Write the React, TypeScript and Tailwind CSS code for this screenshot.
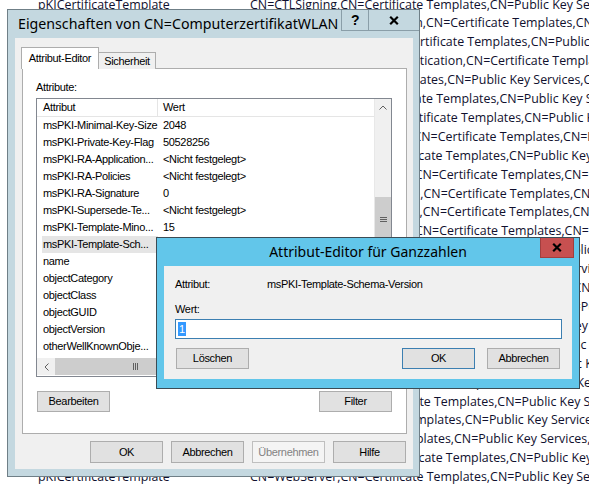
import React from 'react';

const templates = [
  'CTLSigning',
  'DirectoryEmailReplication',
  'DomainController',
  'DomainControllerAuthentication',
  'EFS',
  'EFSRecovery',
  'EnrollmentAgent',
  'EnrollmentAgentOffline',
  'ExchangeUser',
  'ExchangeUserSignature',
  'IPSECIntermediateOffline',
  'IPSECIntermediateOnline',
  'KerberosAuthentication',
  'KeyRecoveryAgent',
  'Machine',
  'MachineEnrollmentAgent',
  'OCSPResponseSigning',
  'OfflineRouter',
  'RASAndIASServer',
  'SmartcardLogon',
  'SmartcardUser',
  'Workstation',
  'SubCA',
  'User',
  'UserSignature',
  'WebServer',
];

const attributes: [string, string][] = [
  ['msPKI-Minimal-Key-Size', '2048'],
  ['msPKI-Private-Key-Flag', '50528256'],
  ['msPKI-RA-Application...', '<Nicht festgelegt>'],
  ['msPKI-RA-Policies', '<Nicht festgelegt>'],
  ['msPKI-RA-Signature', '0'],
  ['msPKI-Supersede-Te...', '<Nicht festgelegt>'],
  ['msPKI-Template-Mino...', '15'],
  ['msPKI-Template-Sch...', '1'],
  ['name', 'ComputerzertifikatWLAN'],
  ['objectCategory', 'CN=PKI-Certificate-Template,CN=Schema,CN=Configuration'],
  ['objectClass', 'top; pKICertificateTemplate'],
  ['objectGUID', '3f2a8c1e-5b7d-4e19-9a06-c4d2e8f71b35'],
  ['objectVersion', '100'],
  ['otherWellKnownObje...', '<Nicht festgelegt>'],
];

type Variant = 'normal' | 'default' | 'disabled';

const WinButton: React.FC<{ label: string; variant?: Variant; className?: string }> = ({
  label,
  variant = 'normal',
  className = '',
}) => {
  const look =
    variant === 'default'
      ? 'border-[#3c7fb1] bg-[#e1e1e1] text-black'
      : variant === 'disabled'
        ? 'border-[#bfbfbf] bg-[#f4f4f4] text-[#838383]'
        : 'border-[#adadad] bg-[#e1e1e1] text-black';
  return (
    <div className={`flex w-[73px] items-center justify-center border ${look} ${className}`}>{label}</div>
  );
};

const CloseGlyph: React.FC<{ size?: number }> = ({ size = 10 }) => (
  <svg width={size} height={size - 1} viewBox="0 0 10 9">
    <path d="M1.2 0.8 L8.8 8.2 M8.8 0.8 L1.2 8.2" stroke="#000" strokeWidth="2.2" />
  </svg>
);

const Background: React.FC = () => (
  <div className="-mt-[4.5px] font-['Open_Sans',sans-serif] text-[12.4px] tracking-normal text-[#10102e]">
    {templates.map((t) => (
      <div key={t} className="flex h-[18.92px] items-center whitespace-nowrap leading-[18.92px]">
        <div className="w-[250px] shrink-0 pl-[38px]">pKICertificateTemplate</div>
        <div className="overflow-hidden">
          CN={t},CN=Certificate Templates,CN=Public Key Services,CN=Services,CN=Configuration,DC=corp,DC=local
        </div>
      </div>
    ))}
  </div>
);

const AttributeList: React.FC = () => (
  <div className="flex h-[279px] w-[356px] flex-col border border-[#828790] bg-white">
    <div className="flex h-[259px]">
      <div className="w-[337px] overflow-hidden">
        <div className="flex h-[18px] items-center border-b border-[#e5e5e5]">
          <div className="h-full w-[121px] border-r border-[#e5e5e5] pl-[6px] leading-[17px]">Attribut</div>
          <div className="pl-[5px] leading-[17px]">Wert</div>
        </div>
        {attributes.map(([name, value]) => (
          <div key={name} className="flex h-[17px] items-center whitespace-nowrap">
            <div className="flex h-full w-[121px] shrink-0 items-center">
              <div
                className={`ml-[5px] flex h-full w-[116px] items-center pl-px ${
                  name === 'msPKI-Template-Sch...' ? 'bg-[#e5e5e5]' : ''
                }`}
              >
                {name}
              </div>
            </div>
            <div className="pl-[5px]">{value}</div>
          </div>
        ))}
      </div>
      <div className="flex w-[17px] flex-col border-l border-[#e8e8e8] bg-[#f0f0f0]">
        <div className="flex h-[17px] items-center justify-center">
          <svg width="8" height="5" viewBox="0 0 8 5">
            <path d="M0.5 4.5 L4 1 L7.5 4.5" stroke="#606060" fill="none" />
          </svg>
        </div>
        <div className="mt-[81px] flex h-[44px] items-center justify-center bg-[#cdcdcd]">
          <svg width="7" height="5" viewBox="0 0 7 5">
            <path d="M0 0.5 H7 M0 2.5 H7 M0 4.5 H7" stroke="#606060" />
          </svg>
        </div>
      </div>
    </div>
    <div className="flex h-[17px]">
      <div className="flex w-[337px] bg-[#f0f0f0]">
        <div className="flex w-[18px] items-center justify-center">
          <svg width="5" height="8" viewBox="0 0 5 8">
            <path d="M4.5 0.5 L1 4 L4.5 7.5" stroke="#606060" fill="none" />
          </svg>
        </div>
        <div className="flex w-[161px] items-center justify-center bg-[#cdcdcd]">
          <svg width="5" height="7" viewBox="0 0 5 7">
            <path d="M0.5 0 V7 M2.5 0 V7 M4.5 0 V7" stroke="#606060" />
          </svg>
        </div>
      </div>
      <div className="w-[17px] bg-[#f0f0f0]" />
    </div>
  </div>
);

const PropertiesDialog: React.FC = () => (
  <div className="absolute left-[7px] top-[9px] flex h-[468px] w-[413px] flex-col border border-[#6f7f87] bg-[#c4d8e0]">
    <div className="flex h-[28px] items-start">
      <div className="self-center whitespace-nowrap pl-[10px] font-['Noto_Sans',sans-serif] text-[14.2px] leading-[20px] tracking-normal text-black">
        Eigenschaften von CN=ComputerzertifikatWLAN
      </div>
      <div className="ml-auto flex">
        <div className="flex h-[21px] w-[27px] items-center justify-center border-b border-l border-[#8a9ea8] font-['Liberation_Sans',sans-serif] text-[14px] font-bold">
          ?
        </div>
        <div className="flex h-[21px] w-[51px] items-center justify-center border-b border-l border-[#8a9ea8]">
          <CloseGlyph size={10} />
        </div>
      </div>
    </div>
    <div className="mx-[7px] mr-[6px] flex h-[431px] flex-col bg-[#f0f0f0] pl-[7px] pr-[6px] pt-[9px]">
      <div className="relative z-10 -mb-px -ml-px flex items-end">
        <div className="flex h-[22px] w-[78px] items-center justify-center border border-b-0 border-[#adadad] bg-white">
          Attribut-Editor
        </div>
        <div className="flex h-[17px] w-[57px] items-center justify-center border-r border-t border-[#adadad] bg-[#f0f0f0]">
          Sicherheit
        </div>
      </div>
      <div className="flex h-[366px] flex-col border border-[#adadad] bg-white pl-[13px] pt-[12px]">
        <div className="h-[13px] leading-[13px]">Attribute:</div>
        <div className="mt-[4px]">
          <AttributeList />
        </div>
        <div className="mt-[14px] flex w-[356px] justify-between">
          <WinButton label="Bearbeiten" className="ml-px h-[21px]" />
          <WinButton label="Filter" className="h-[21px]" />
        </div>
      </div>
      <div className="mt-[7px] flex justify-end gap-[8px] pr-px">
        <WinButton label="OK" className="h-[22px]" />
        <WinButton label="Abbrechen" className="h-[22px]" />
        <WinButton label="Übernehmen" variant="disabled" className="h-[22px]" />
        <WinButton label="Hilfe" className="h-[22px]" />
      </div>
    </div>
  </div>
);

const IntegerEditor: React.FC = () => (
  <div className="absolute left-[156px] top-[237px] flex h-[152px] w-[424px] flex-col border border-[#3b4c55] bg-[#62c6ea]">
    <div className="relative flex h-[28px] items-center justify-center">
      <div className="whitespace-nowrap font-['Noto_Sans',sans-serif] text-[14px] leading-[20px] tracking-normal text-black">
        Attribut-Editor für Ganzzahlen
      </div>
      <div className="absolute right-[5px] top-0 flex h-[20px] w-[34px] items-center justify-center border-x border-b border-[#a23e3e] bg-[#c75050]">
        <CloseGlyph size={10} />
      </div>
    </div>
    <div className="mx-[7px] flex h-[113px] flex-col bg-[#f0f0f0] pl-[11px] pr-[10px] pt-[12px]">
      <div className="flex h-[13px] leading-[13px]">
        <div className="w-[92px]">Attribut:</div>
        <div>msPKI-Template-Schema-Version</div>
      </div>
      <div className="mt-[12px] h-[13px] leading-[13px]">Wert:</div>
      <div className="mt-[3px] flex h-[20px] items-center border border-[#3c7fb1] bg-white pl-[2px]">
        <span className="bg-[#3399ff] px-px leading-[14px] text-white">1</span>
      </div>
      <div className="mt-[9px] flex">
        <WinButton label="Löschen" className="ml-px h-[21px]" />
        <WinButton label="OK" variant="default" className="ml-auto h-[21px]" />
        <WinButton label="Abbrechen" className="ml-[12px] mr-[2px] h-[21px]" />
      </div>
    </div>
  </div>
);

export default function App() {
  return (
    <div className="relative h-[488px] w-[589px] overflow-hidden bg-white font-['Liberation_Sans',Arial,sans-serif] text-[11px] tracking-[-0.33px] text-black">
      <Background />
      <PropertiesDialog />
      <IntegerEditor />
    </div>
  );
}
